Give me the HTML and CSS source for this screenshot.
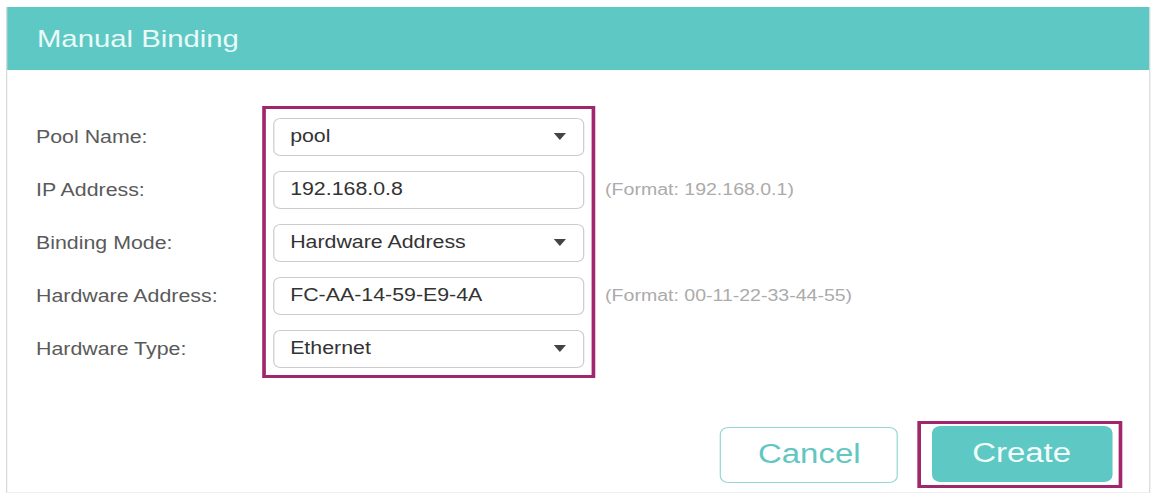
FILE: index.html
```html
<!DOCTYPE html>
<html lang="en">
<head>
    <meta charset="UTF-8">
    <meta name="viewport" content="width=device-width, initial-scale=1.0">
    <title>Manual Binding</title>
    <link rel="stylesheet" href="styles.css">
</head>
<body>

<div class="dialog">
    <header class="dialog-title">Manual Binding</header>

    <div class="form">
        <div class="labels">
            <div class="row">Pool Name:</div>
            <div class="row">IP Address:</div>
            <div class="row">Binding Mode:</div>
            <div class="row">Hardware Address:</div>
            <div class="row">Hardware Type:</div>
        </div>

        <div class="fields highlight">
            <div class="field select">
                <span>pool</span>
                <svg class="arrow" viewBox="0 0 10 7"><path d="M0 0H10L5 7Z"/></svg>
            </div>
            <div class="field"><span>192.168.0.8</span></div>
            <div class="field select">
                <span>Hardware Address</span>
                <svg class="arrow" viewBox="0 0 10 7"><path d="M0 0H10L5 7Z"/></svg>
            </div>
            <div class="field"><span>FC-AA-14-59-E9-4A</span></div>
            <div class="field select">
                <span>Ethernet</span>
                <svg class="arrow" viewBox="0 0 10 7"><path d="M0 0H10L5 7Z"/></svg>
            </div>
        </div>

        <div class="hints">
            <div class="row"></div>
            <div class="row">(Format: 192.168.0.1)</div>
            <div class="row"></div>
            <div class="row">(Format: 00-11-22-33-44-55)</div>
            <div class="row"></div>
        </div>
    </div>

    <div class="actions">
        <button class="btn btn-cancel">Cancel</button>
        <div class="highlight highlight-btn">
            <button class="btn btn-create">Create</button>
        </div>
    </div>
</div>

</body>
</html>
```

FILE: styles.css
```css
/* Base */
body {
    margin: 0;
    background: #fff;
    font-family: 'Liberation Sans', Arial, sans-serif;
    color: #555;
    overflow: hidden;
}

/* the capture is stretched sideways, so the whole dialog is too */
.dialog {
    width: 936px;
    margin: 7px 0 0 5.7px;
    border-left: 1px solid #d9d9d9;
    border-right: 1px solid #d9d9d9;
    border-bottom: 1px solid #eeeeee;
    transform: scaleX(1.22);
    transform-origin: 0 0;
}

.dialog-title {
    height: 63px;
    line-height: 63px;
    padding-left: 24.4px;
    background-color: #5ec8c4;
    color: #e9faf9;
    font-size: 24px;
}

/* Form */
.form {
    display: flex;
    align-items: flex-start;
    margin-top: 36px;
}

.labels,
.hints {
    display: flex;
    flex-direction: column;
    gap: 15px;
    padding-top: 12px;
}

.labels {
    width: 185.3px;
    padding-left: 23.6px;
    font-size: 17.5px;
    color: #5a5a5a;
}

.hints {
    padding-left: 8.2px;
    font-size: 16px;
    color: #ababab;
}

.row {
    height: 38px;
    display: flex;
    align-items: center;
}

.highlight {
    border: 3.5px solid #a0276c;
    border-left-width: 3px;
    border-right-width: 3px;
}

.fields {
    display: flex;
    flex-direction: column;
    gap: 15px;
    padding: 8.5px 6px 7.5px;
}

.field {
    width: 255px;
    height: 38px;
    box-sizing: border-box;
    display: flex;
    align-items: center;
    justify-content: space-between;
    padding: 0 13px;
    border: 1px solid #cccccc;
    border-radius: 6px;
    font-size: 17.5px;
    color: #333;
}

.arrow {
    width: 10px;
    height: 7px;
    fill: #444;
    margin-right: 1px;
}

/* Buttons */
.actions {
    display: flex;
    justify-content: flex-end;
    align-items: center;
    gap: 15.6px;
    margin-top: 43px;
    padding: 0 22px 4px 0;
}

.highlight-btn {
    padding: 1.5px 5.5px 3.5px 8.5px;
}

.btn {
    height: 56px;
    font-family: 'Liberation Sans', Arial, sans-serif;
    font-size: 27px;
    border-radius: 7px;
    cursor: pointer;
}

.btn-cancel {
    width: 146px;
    background: #fff;
    border: 1px solid #93d8d5;
    color: #62c6c2;
}

.btn-create {
    width: 148px;
    background-color: #5ec8c4;
    border: none;
    color: #f2fcfb;
}
```
